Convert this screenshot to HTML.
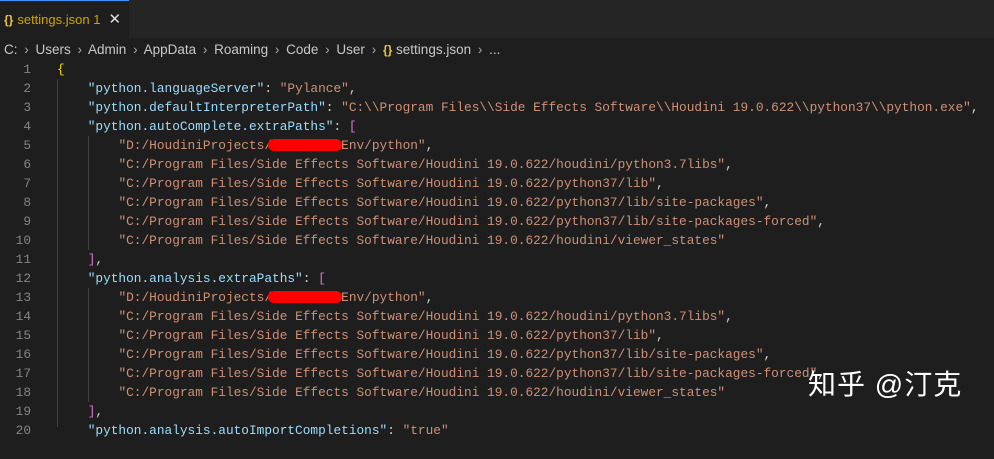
<!DOCTYPE html>
<html><head><meta charset="utf-8"><style>
*{margin:0;padding:0;box-sizing:border-box}
body{width:994px;height:427px;background:#1e1e1e;overflow:hidden;position:relative;font-family:"Liberation Sans",sans-serif}
.tabbar{position:absolute;left:0;top:0;width:994px;height:38px;background:#252526}
.tab{position:absolute;left:0;top:0;width:129px;height:38px;background:#1e1e1e;border-top:1px solid #3794ff;color:#cca700;font-size:13px;line-height:38px;padding-left:4px;white-space:nowrap}
.tab b{color:#e8c547;font-weight:bold;font-size:12px;margin-right:4px}
.tab .x{color:#ddd;font-size:15px;margin-left:8px}
.crumb{position:absolute;left:4px;top:40px;height:20px;line-height:20px;color:#c8c8c8;font-size:13.5px;white-space:nowrap}
.crumb b{color:#e8c547;font-size:12px}
.crumb i{font-style:normal;color:#aaa;margin:0 3px}
.code{position:absolute;left:0;top:60px;font-family:"Liberation Mono",monospace;font-size:12.8px;line-height:19px;white-space:pre}
.ln{position:absolute;left:0;width:31px;text-align:right;color:#858585}
.l{position:absolute;left:57px;color:#d4d4d4}
.k{color:#9cdcfe}.s{color:#ce9178}.y{color:#ffd700}.p{color:#da70d6}
.g{position:absolute;width:1px;background:#404040}
.red{position:absolute;background:#f00;border-radius:6px;height:12px}
.wm{position:absolute;left:808px;top:363px;color:#fff;font-size:28px;font-family:"Liberation Sans","Noto Sans CJK SC",sans-serif;letter-spacing:1px}
</style></head><body>
<div class="tabbar"><div class="tab"><b>{}</b>settings.json 1<span class="x">✕</span></div></div>
<div class="crumb">C: <i>›</i> Users <i>›</i> Admin <i>›</i> AppData <i>›</i> Roaming <i>›</i> Code <i>›</i> User <i>›</i> <b>{}</b> settings.json <i>›</i> ...</div>
<div class="g" style="left:57px;top:79px;height:348px"></div>
<div class="g" style="left:88px;top:136px;height:114px"></div>
<div class="g" style="left:88px;top:288px;height:114px"></div>
<div class="code">
<div class="ln" style="top:0">1</div><div class="l" style="top:0"><span class="y">{</span></div>
<div class="ln" style="top:19px">2</div><div class="l" style="top:19px">    <span class="k">"python.languageServer"</span>: <span class="s">"Pylance"</span>,</div>
<div class="ln" style="top:38px">3</div><div class="l" style="top:38px">    <span class="k">"python.defaultInterpreterPath"</span>: <span class="s">"C:\\Program Files\\Side Effects Software\\Houdini 19.0.622\\python37\\python.exe"</span>,</div>
<div class="ln" style="top:57px">4</div><div class="l" style="top:57px">    <span class="k">"python.autoComplete.extraPaths"</span>: <span class="p">[</span></div>
<div class="ln" style="top:76px">5</div><div class="l" style="top:76px">        <span class="s">"D:/HoudiniProjects/xxxxxxxxxEnv/python"</span>,</div>
<div class="ln" style="top:95px">6</div><div class="l" style="top:95px">        <span class="s">"C:/Program Files/Side Effects Software/Houdini 19.0.622/houdini/python3.7libs"</span>,</div>
<div class="ln" style="top:114px">7</div><div class="l" style="top:114px">        <span class="s">"C:/Program Files/Side Effects Software/Houdini 19.0.622/python37/lib"</span>,</div>
<div class="ln" style="top:133px">8</div><div class="l" style="top:133px">        <span class="s">"C:/Program Files/Side Effects Software/Houdini 19.0.622/python37/lib/site-packages"</span>,</div>
<div class="ln" style="top:152px">9</div><div class="l" style="top:152px">        <span class="s">"C:/Program Files/Side Effects Software/Houdini 19.0.622/python37/lib/site-packages-forced"</span>,</div>
<div class="ln" style="top:171px">10</div><div class="l" style="top:171px">        <span class="s">"C:/Program Files/Side Effects Software/Houdini 19.0.622/houdini/viewer_states"</span></div>
<div class="ln" style="top:190px">11</div><div class="l" style="top:190px">    <span class="p">]</span>,</div>
<div class="ln" style="top:209px">12</div><div class="l" style="top:209px">    <span class="k">"python.analysis.extraPaths"</span>: <span class="p">[</span></div>
<div class="ln" style="top:228px">13</div><div class="l" style="top:228px">        <span class="s">"D:/HoudiniProjects/xxxxxxxxxEnv/python"</span>,</div>
<div class="ln" style="top:247px">14</div><div class="l" style="top:247px">        <span class="s">"C:/Program Files/Side Effects Software/Houdini 19.0.622/houdini/python3.7libs"</span>,</div>
<div class="ln" style="top:266px">15</div><div class="l" style="top:266px">        <span class="s">"C:/Program Files/Side Effects Software/Houdini 19.0.622/python37/lib"</span>,</div>
<div class="ln" style="top:285px">16</div><div class="l" style="top:285px">        <span class="s">"C:/Program Files/Side Effects Software/Houdini 19.0.622/python37/lib/site-packages"</span>,</div>
<div class="ln" style="top:304px">17</div><div class="l" style="top:304px">        <span class="s">"C:/Program Files/Side Effects Software/Houdini 19.0.622/python37/lib/site-packages-forced"</span>,</div>
<div class="ln" style="top:323px">18</div><div class="l" style="top:323px">        <span class="s">"C:/Program Files/Side Effects Software/Houdini 19.0.622/houdini/viewer_states"</span></div>
<div class="ln" style="top:342px">19</div><div class="l" style="top:342px">    <span class="p">]</span>,</div>
<div class="ln" style="top:361px">20</div><div class="l" style="top:361px">    <span class="k">"python.analysis.autoImportCompletions"</span>: <span class="s">"true"</span></div>
</div>
<div class="red" style="left:268px;top:139px;width:74px"></div>
<div class="red" style="left:268px;top:291px;width:74px"></div>
<div class="wm">知乎 @汀克</div>
</body></html>
